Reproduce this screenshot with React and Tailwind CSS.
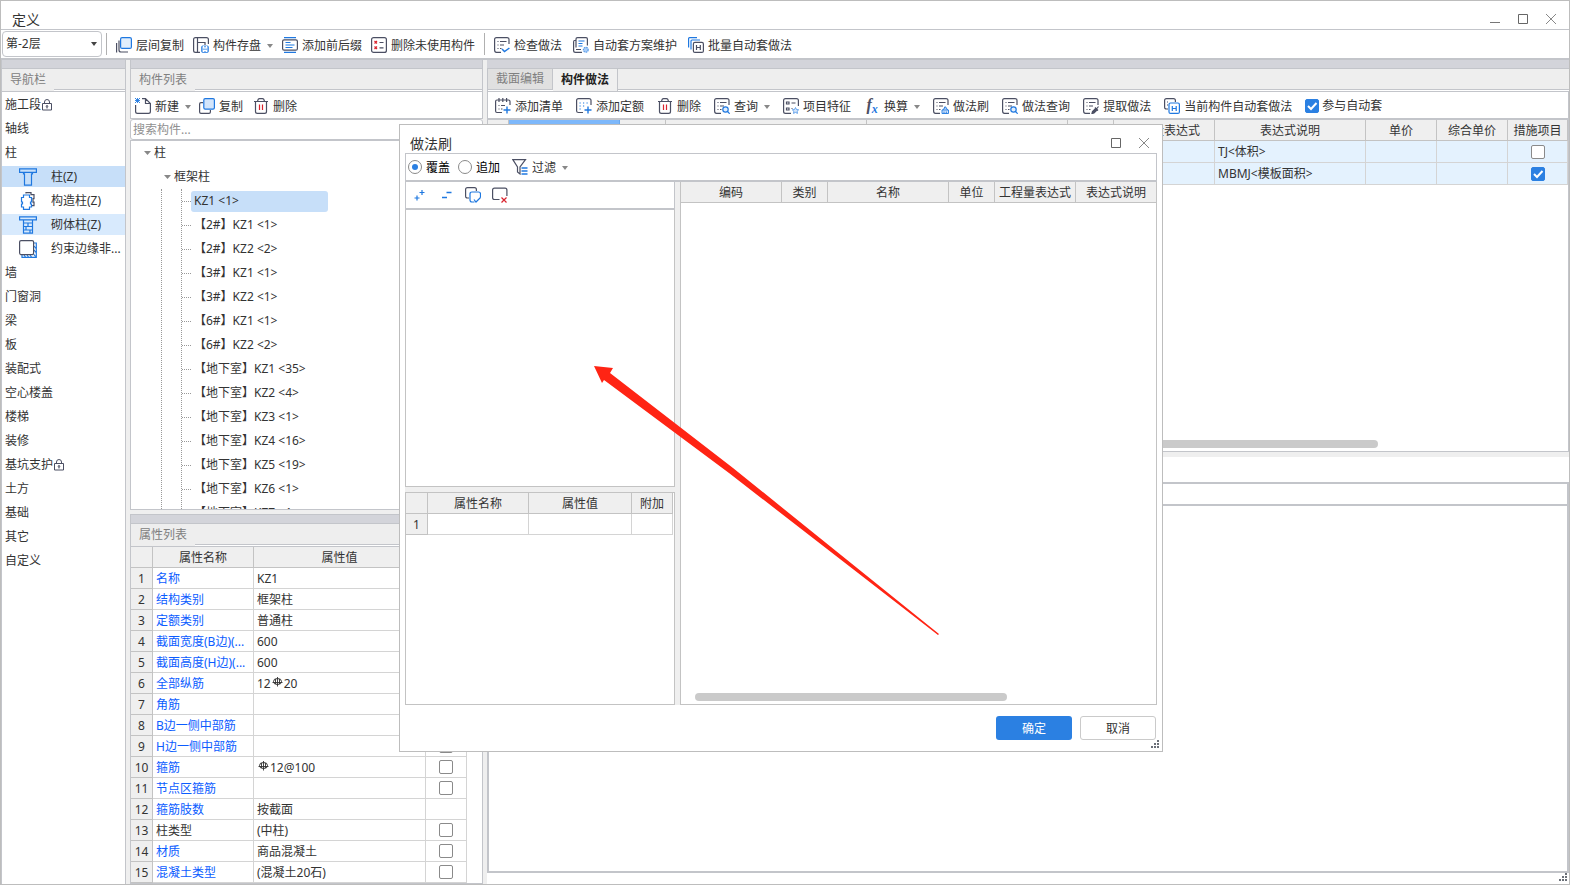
import React, { useState } from 'react';

const DARK = '#4b4f63';
const BLUE = '#1f78e0';
const RED = '#d9232e';

const Icon = ({ children, size = 16 }) => (
    <svg width={size} height={size} viewBox="0 0 16 16" fill="none" stroke={DARK} strokeWidth="1.2" className="shrink-0" aria-hidden="true">
        {children}
    </svg>
);

// Sheet outline with list lines, shared by most of the "做法" icons
const Sheet = () => (
    <>
        <path d="M15 7V2.5Q15 .6 13 .6H2.5Q.6 .6 .6 2.5V13Q.6 15.4 2.5 15.4H7" />
        <path d="M3.5 4.5h1M6 4.5h6.500M3.500 8h1M6 8h4M3.500 11.500h1M6 11.500h1.500" />
    </>
);

const icons = {
    layers: (
        <Icon>
            <path d="M.6 6v9.400M3 3.500v9.500q0 2 2 2h7" />
            <rect x="4.600" y=".6" width="10.800" height="10.800" rx="1.500" fill="#e1eefc" stroke={BLUE} />
        </Icon>
    ),
    save: (
        <Icon>
            <path d="M15.400 7V2.500Q15.400.6 13.500.6H2.500Q.6.6.6 2.500V13.500Q.6 15.400 2.500 15.400H7M4.500.6v14.800M4.500 5.500h7.500V8" />
            <rect x="8.600" y="9" width="6.800" height="6.400" rx="1" fill="#8dbcf3" stroke={BLUE} strokeWidth=".8" />
            <path d="M10.500 9v2h3V9M10.500 15v-1.500h3V15" stroke="#fff" />
        </Icon>
    ),
    prefix: (
        <Icon>
            <path d="M2 .6h12M2 15.400h12" stroke={BLUE} />
            <rect x=".6" y="2.800" width="14.800" height="10.400" rx="1.500" />
            <path d="M3.500 5.500h5M3.500 8h9M3.500 10.500h7" stroke={BLUE} />
        </Icon>
    ),
    unused: (
        <Icon>
            <rect x=".6" y=".6" width="14.800" height="14.800" rx="2" />
            <path d="M3.500 4l2.500 2.500M6 4L3.500 6.500M3.500 9.500L6 12M6 9.500L3.500 12" stroke={RED} />
            <path d="M8.500 5.500h4M8.500 10.800h4" />
        </Icon>
    ),
    check: (
        <Icon>
            <Sheet />
            <path d="M8 12l2.500 2.500L15.400 11" stroke={BLUE} strokeWidth="1.500" />
        </Icon>
    ),
    scheme: (
        <Icon>
            <path d="M2.500 3.500H1.500Q.6 3.500.6 5v8.500q0 1.900 1.900 1.900H9M3 10.500V2Q3 .6 4.500.6h8.500Q14.400.6 14.400 2v6.500M3 12.500h5" />
            <path d="M5.500 4h6M5.500 6.500h4M5.500 9h4" stroke={BLUE} />
            <circle cx="12.800" cy="12.800" r="2.400" fill="#a9cdf7" stroke="#5a9dea" strokeDasharray="1.500 .6" />
        </Icon>
    ),
    batch: (
        <Icon>
            <path d="M.6 10.500V1.500Q.6.6 1.500.6H9M3 12.500V4q0-1 1-1h8" stroke={BLUE} />
            <rect x="5.400" y="5.400" width="10" height="10" rx="1.500" />
            <path d="M8.500 8v5M12.300 8v5M8.500 10.500h4" />
        </Icon>
    ),
    create: (
        <Icon>
            <path d="M.6 7v6.500q0 1.900 1.900 1.900h11q1.900 0 1.900-1.900V5.500L10.500.6H7M10.500.6V5.500h5" />
            <path d="M0 0l5 5M5 0L0 5M2.500 0v5M0 2.500h5" stroke={BLUE} strokeWidth=".9" />
        </Icon>
    ),
    copy: (
        <Icon>
            <path d="M4 4.600H2q-1.400 0-1.400 1.400v8q0 1.400 1.400 1.400h8q1.400 0 1.400-1.400v-2" />
            <rect x="4.800" y=".6" width="10.600" height="10.600" rx="1.400" fill="#d3e5fb" stroke={BLUE} />
        </Icon>
    ),
    trash: (
        <Icon>
            <path d="M1 3.500h14M4.500 3.500Q5 .6 6.500.6h3Q11 .6 11.500 3.500M2.500 3.500v10q0 1.900 1.900 1.900h7.200q1.900 0 1.900-1.900v-10" />
            <path d="M6.500 6.500v5.500M9.500 6.500v5.500" stroke={RED} />
        </Icon>
    ),
    addList: (
        <Icon>
            <path d="M15 7V3.500Q15 2 13.500 2H2Q.6 2 .6 3.500V13Q.6 14.500 2 14.500H7M4 0v4M7.800 0v4M11.600 0v4M3.500 7.500h1M6 7.500h4M3.500 11h1M6 11h1.500" />
            <path d="M12 8.500v7M8.500 12h7" stroke={BLUE} strokeWidth="1.400" />
        </Icon>
    ),
    addQuota: (
        <Icon>
            <path d="M15 7V2.500Q15 .6 13 .6H2.500Q.6.6.6 2.500V13Q.6 14.500 2.500 14.500H7" />
            <path d="M3.500 5h1.200M7 5h1.200M10.500 5h1.200M3.500 8h1.200M7 8h1.200M3.500 11h1.200" stroke={BLUE} />
            <path d="M12 8.500v7M8.500 12h7" stroke={BLUE} strokeWidth="1.400" />
        </Icon>
    ),
    query: (
        <Icon>
            <Sheet />
            <circle cx="11.500" cy="11.500" r="2.700" fill="#e1eefc" stroke={BLUE} />
            <path d="M13.500 13.500l2.200 2.200" stroke={BLUE} />
        </Icon>
    ),
    feature: (
        <Icon>
            <path d="M15.400 8V2.500Q15.400.6 13.500.6H2.500Q.6.6.6 2.500V13.500Q.6 15.400 2.500 15.400H8" />
            <path d="M3.500 4h2.500v2H3.500zM3.500 10h2.500v2H3.500zM8.500 5h4M8.500 10.500h1" />
            <path d="M12.500 9.500l1 2 2.200.3-1.600 1.500.4 2.100-2-1-2 1 .4-2.100-1.600-1.500 2.200-.3z" fill="#d3e5fb" stroke="#5a9dea" strokeWidth=".9" />
        </Icon>
    ),
    brush: (
        <Icon>
            <Sheet />
            <path d="M9 15.500V12h6.500v3.500zM11 15.500v-2M13.300 15.500v-2M10 12q0-1.500 1.500-1.500V9h1.500v1.500Q14.500 10.500 14.500 12" fill="#d3e5fb" stroke={BLUE} strokeWidth=".9" />
        </Icon>
    ),
    extract: (
        <Icon>
            <Sheet />
            <path d="M9 15.500l.5-2 3-3 1.500 1.500-3 3zM12 9.500l3 3M13.500 11l2-2.500" fill={DARK} />
        </Icon>
    ),
    current: (
        <Icon>
            <path d="M4 11H2.500Q.6 11 .6 9V2.500Q.6.6 2.500.6h7q1.900 0 1.900 1.900V4M3 4h1M3 7h1" />
            <rect x="5" y="5" width="10.400" height="10.400" rx="1.500" stroke={BLUE} />
            <path d="M8.300 8v5M12.200 8v5M8.300 10.500h4" stroke={BLUE} />
        </Icon>
    ),
    filter: (
        <Icon>
            <path d="M8 15V8L13.500.6H.8L5.500 8v5z" stroke={DARK} />
            <path d="M9.500 9h6M9.500 12h6M9.500 15h6" stroke={BLUE} strokeWidth="1.400" />
        </Icon>
    ),
    expand: (
        <Icon>
            <path d="M11 3v5M8.500 5.500h5M6 8.500v5M3.500 11h5" stroke={BLUE} />
        </Icon>
    ),
    collapse: (
        <Icon>
            <path d="M8.500 5.500h5M4 10.500h5" stroke={BLUE} strokeWidth="1.300" />
        </Icon>
    ),
    copyCheck: (
        <Icon>
            <path d="M4 11H2.500Q.6 11 .6 9V2.500Q.6.6 2.500.6h7q1.900 0 1.900 1.900V4" />
            <path d="M9.500 15H7q-2 0-2-2V7q0-2 2-2h6.500q2 0 2 2v3.500M9 12.500l2 2.500 4.500-4.500" stroke={BLUE} />
        </Icon>
    ),
    clear: (
        <Icon>
            <path d="M7.500 12.500H2.500Q.6 12.500.6 10.500V3q0-1.900 1.900-1.900h10.500q1.900 0 1.900 1.900v6" />
            <path d="M9.500 10.500l5 5M14.500 10.500l-5 5" stroke={RED} />
        </Icon>
    )
};

const navIcons = {
    column: (
        <svg width="18" height="18" viewBox="0 0 18 18" fill="none" stroke={BLUE} strokeWidth="1.200" aria-hidden="true">
            <path d="M.6.8h16.800v3.500H.6zM4.500 4.300v1.500h1v11.400h7V5.800h1V4.300" />
        </svg>
    ),
    structural: (
        <svg width="18" height="18" viewBox="0 0 18 18" fill="none" stroke={BLUE} strokeWidth="1.200" aria-hidden="true">
            <path d="M7 1.500V.6h5v2h3v4h-1v3.500h1v3.500h-2" stroke={DARK} />
            <path d="M4.500 3h6v2.500h2V10h-1v2h1v3h-2v2.400h-6V15h-2v-3h1v-2h-1V5.500h2z" />
        </svg>
    ),
    masonry: (
        <svg width="18" height="18" viewBox="0 0 18 18" fill="none" stroke={BLUE} strokeWidth="1.200" aria-hidden="true">
            <path d="M.6.8h16.800v3H.6zM4.500 4v13.200h9V4M4.500 7h9M4.500 10.500h9M4.500 14h9M9 7v3.500M7 10.500V14M11 14v3" />
        </svg>
    ),
    edge: (
        <svg width="18" height="18" viewBox="0 0 18 18" fill="none" stroke={DARK} strokeWidth="1.200" aria-hidden="true">
            <path d="M3 15v2.300h14.300V3H15M5 15l1.500 2M8 15l1.500 2M11 15l1.500 2M14.500 14l2 2.500M15 10l2 2.500M15 6l2 2.500" stroke={BLUE} />
            <rect x=".6" y=".6" width="14" height="14" rx="1.500" />
        </svg>
    )
};

const Caret = ({ dark, large }) => (
    <svg width={large ? 7 : 6} height="4" viewBox="0 0 6 4" preserveAspectRatio="none" fill={dark ? '#444' : '#888'} className="shrink-0" aria-hidden="true">
        <path d="M0 0h6L3 4z" />
    </svg>
);

const Lock = () => (
    <svg width="10" height="12" viewBox="0 0 10 12" fill="none" stroke={DARK} aria-hidden="true">
        <path d="M2.500 4.500V3q0-2.500 2.500-2.500T7.500 3v1.500M.5 4.500h9v6.500h-9zM5 8v1.500" />
        <circle cx="5" cy="7.300" r=".8" />
    </svg>
);

// Rebar grade mark, has no unicode glyph
const Rebar = () => (
    <svg width="11" height="10" viewBox="0 0 11 10" fill="none" stroke="#333" className="mx-px mb-1" aria-label="C">
        <ellipse cx="5.500" cy="4.500" rx="4" ry="3" />
        <path d="M5.500 0v9.500M3.500 2v5M7.500 2v5M.5 5.500h10" strokeWidth=".9" />
    </svg>
);

const Grip = () => (
    <svg width="8" height="8" viewBox="0 0 8 8" fill="#6b7078" aria-hidden="true">
        <path d="M6 0h2v2H6zM3 3h2v2H3zM6 3h2v2H6zM0 6h2v2H0zM3 6h2v2H3zM6 6h2v2H6z" />
    </svg>
);

const WindowControls = ({ minimize }) => (
    <div className="flex pr-1">
        {minimize && (
            <button className="flex w-7 justify-center" aria-label="最小化">
                <svg width="12" height="12" viewBox="0 0 12 12" stroke="#777"><path d="M1 9.500h10" /></svg>
            </button>
        )}
        <button className="flex w-7 justify-center" aria-label="最大化">
            <svg width="12" height="12" viewBox="0 0 12 12" fill="none" stroke="#666"><path d="M1.500 1.500h9v9h-9z" /></svg>
        </button>
        <button className="flex w-7 justify-center" aria-label="关闭">
            <svg width="12" height="12" viewBox="0 0 12 12" stroke="#888"><path d="M1 1l10 10M11 1L1 11" /></svg>
        </button>
    </div>
);

const ToolButton = ({ icon, label, menu }) => (
    <button className="flex items-center gap-1 whitespace-nowrap">
        {icons[icon]}
        <span className="pt-0.5">{label}</span>
        {menu && <span className="pt-0.5 pl-0.5"><Caret /></span>}
    </button>
);

const CheckBox = ({ checked, label, id }) => {
    const [on, setOn] = useState(Boolean(checked));
    return (
        <span className="inline-grid align-middle">
            <input
                id={id}
                type="checkbox"
                aria-label={label}
                checked={on}
                onChange={() => setOn(!on)}
                className="col-start-1 row-start-1 size-3.5 appearance-none rounded-xs border border-[#8a8a8a] bg-white checked:border-[#2b80e2] checked:bg-[#2b80e2]"
            />
            {on && (
                <svg width="14" height="14" viewBox="0 0 14 14" fill="none" stroke="#fff" strokeWidth="2" className="pointer-events-none col-start-1 row-start-1">
                    <path d="M3 7l3 3 5.500-6" />
                </svg>
            )}
        </span>
    );
};

const PanelTitle = ({ children }) => (
    <>
        <div className="h-[9px] shrink-0 border-b border-[#c3c5ca] bg-[#d3d4da]" />
        <div className="flex h-[22px] shrink-0 items-start bg-white text-[#808080]">
            <h2 className="flex h-[22px] items-center bg-[#eeeeee] px-2">{children}</h2>
            <div className="h-[21px] flex-1 border-b border-[#c3c5ca] bg-[#eeeeee]" />
        </div>
    </>
);

const navItems = [
    { label: '施工段', locked: true },
    { label: '轴线' },
    { label: '柱' },
    { label: '柱(Z)', icon: 'column', bg: 'bg-[#c7dff9]' },
    { label: '构造柱(Z)', icon: 'structural' },
    { label: '砌体柱(Z)', icon: 'masonry', bg: 'bg-[#d8eafd]' },
    { label: '约束边缘非...', icon: 'edge' },
    { label: '墙' },
    { label: '门窗洞' },
    { label: '梁' },
    { label: '板' },
    { label: '装配式' },
    { label: '空心楼盖' },
    { label: '楼梯' },
    { label: '装修' },
    { label: '基坑支护', locked: true },
    { label: '土方' },
    { label: '基础' },
    { label: '其它' },
    { label: '自定义' }
];

const members = [
    'KZ1 <1>',
    '【2#】KZ1 <1>',
    '【2#】KZ2 <2>',
    '【3#】KZ1 <1>',
    '【3#】KZ2 <1>',
    '【6#】KZ1 <1>',
    '【6#】KZ2 <2>',
    '【地下室】KZ1 <35>',
    '【地下室】KZ2 <4>',
    '【地下室】KZ3 <1>',
    '【地下室】KZ4 <16>',
    '【地下室】KZ5 <19>',
    '【地下室】KZ6 <1>',
    '【地下室】KZ7 <1>'
];

const properties = [
    { name: '名称', value: 'KZ1' },
    { name: '结构类别', value: '框架柱', box: true },
    { name: '定额类别', value: '普通柱', box: true },
    { name: '截面宽度(B边)(...', value: '600', box: true },
    { name: '截面高度(H边)(...', value: '600', box: true },
    { name: '全部纵筋', value: <span className="flex items-center">12<Rebar />20</span>, box: true },
    { name: '角筋', value: '', box: true },
    { name: 'B边一侧中部筋', value: '', box: true },
    { name: 'H边一侧中部筋', value: '', box: true },
    { name: '箍筋', value: <span className="flex items-center"><Rebar />12@100</span>, box: true },
    { name: '节点区箍筋', value: '', box: true },
    { name: '箍筋肢数', value: '按截面' },
    { name: '柱类型', value: '(中柱)', plain: true, box: true },
    { name: '材质', value: '商品混凝土', box: true },
    { name: '混凝土类型', value: '(混凝土20石)', box: true }
];

const th = 'h-[21px] border-r border-b border-[#c3c3c3] bg-[#efefef] p-0 pt-0.5 text-center font-normal whitespace-nowrap';
const rowNo = 'h-[21px] border-r border-b border-[#c3c3c3] bg-[#efefef] p-0 pt-0.5 text-center font-normal';
const td = 'h-[21px] border-r border-b border-[#d4d4d4] p-0 whitespace-nowrap';

const Sidebar = () => (
    <nav className="flex w-[125px] shrink-0 flex-col border-x border-[#c3c5ca] bg-white">
        <PanelTitle>导航栏</PanelTitle>
        <ul className="flex-1 border-t border-[#c3c5ca] pt-px">
            {navItems.map((item) => (
                <li key={item.label} className="h-6 pt-px">
                    {item.icon ? (
                        <a href="#" className={`flex h-[21px] items-center gap-3.5 pl-[17px] whitespace-nowrap ${item.bg || ''}`}>
                            {navIcons[item.icon]}
                            {item.label}
                        </a>
                    ) : (
                        <a href="#" className="flex h-[21px] items-center gap-px pl-[3px]">
                            {item.label}
                            {item.locked && <Lock />}
                        </a>
                    )}
                </li>
            ))}
        </ul>
    </nav>
);

const MemberTree = () => (
    <div className="min-h-0 flex-1 overflow-hidden border border-[#c3c5ca] bg-white">
        <div className="flex h-6 items-center gap-[3px] pl-[13px]"><Caret large />柱</div>
        <div className="flex h-6 items-center gap-[3px] pl-[33px]"><Caret large />框架柱</div>
        <div className="ml-[30px] border-l border-dotted border-[#999] pl-[19px]">
            <ul className="border-l border-dotted border-[#999]">
                {members.map((name, index) => (
                    <li key={name} className="flex h-6 items-center">
                        <span className="w-[9px] border-t border-dotted border-[#999]" />
                        <span className={`flex h-[21px] w-[137px] items-center rounded-[3px] pl-[3px] whitespace-nowrap ${index === 0 ? 'bg-[#c7dff9]' : ''}`}>
                            {name}
                        </span>
                    </li>
                ))}
            </ul>
        </div>
    </div>
);

const PropertyTable = () => (
    <div className="shrink-0 border border-[#c3c5ca] bg-white">
        <table className="w-[336px] table-fixed border-separate border-spacing-0">
            <colgroup>
                <col className="w-[22px]" />
                <col className="w-[101px]" />
                <col className="w-[172px]" />
                <col className="w-[41px]" />
            </colgroup>
            <thead>
                <tr>
                    <th className={th} />
                    <th className={th}>属性名称</th>
                    <th className={th}>属性值</th>
                    <th className={th} />
                </tr>
            </thead>
            <tbody>
                {properties.map((row, index) => (
                    <tr key={row.name}>
                        <th className={rowNo}>{index + 1}</th>
                        <td className={`${td} pt-0.5 pl-[3px] ${row.plain ? '' : 'text-[#0b5cff]'}`}>{row.name}</td>
                        <td className={`${td} pt-0.5 pl-[3px]`}>{row.value}</td>
                        <td className={`${td} text-center leading-none`}>{row.box && <CheckBox label={row.name} />}</td>
                    </tr>
                ))}
            </tbody>
        </table>
    </div>
);

const MemberPanel = () => (
    <section className="flex w-[353px] shrink-0 flex-col">
        <div className="flex min-h-0 flex-1 flex-col">
            <div className="flex shrink-0 flex-col border-x border-[#c3c5ca]"><PanelTitle>构件列表</PanelTitle></div>
            <div className="flex h-7 shrink-0 items-center gap-2 border border-[#c3c5ca] bg-white pt-px pl-1">
                <ToolButton icon="create" label="新建" menu />
                <ToolButton icon="copy" label="复制" />
                <span className="pl-0.5"><ToolButton icon="trash" label="删除" /></span>
            </div>
            <input
                type="text"
                aria-label="搜索构件"
                placeholder="搜索构件..."
                className="h-[21px] shrink-0 rounded-[3px] border border-[#c3c5ca] bg-white px-0.5 placeholder:text-[#909090]"
            />
            <MemberTree />
        </div>
        <div className="mt-1 flex shrink-0 flex-col">
            <div className="flex flex-col border-x border-t border-[#c3c5ca]"><PanelTitle>属性列表</PanelTitle></div>
            <PropertyTable />
        </div>
    </section>
);

const practiceRows = [
    { expr: 'TJ<体积>', measure: false },
    { expr: 'MBMJ<模板面积>', measure: true }
];

const PracticePanel = () => (
    <section className="flex min-w-0 flex-1 flex-col bg-white">
        <div className="h-[9px] shrink-0 border-b border-[#c3c5ca] bg-[#d3d4da]" />
        <div role="tablist" className="flex h-[22px] shrink-0 items-start border-l border-[#c3c5ca]">
            <button role="tab" aria-selected="false" className="h-[21px] border-r border-b border-[#c3c5ca] bg-[#e0e0e0] px-2 text-[#808080]">截面编辑</button>
            <button role="tab" aria-selected="true" className="h-[22px] border-r border-[#c3c5ca] bg-[#f0f0f0] px-2 font-bold text-[#222]">构件做法</button>
            <div className="h-[21px] flex-1 border-b border-[#c3c5ca] bg-[#eeeeee]" />
        </div>
        <div className="flex h-[29px] shrink-0 items-center gap-[13px] border border-b-2 border-[#c3c5ca] pt-px pl-[7px]">
            <ToolButton icon="addList" label="添加清单" />
            <ToolButton icon="addQuota" label="添加定额" />
            <ToolButton icon="trash" label="删除" />
            <ToolButton icon="query" label="查询" menu />
            <ToolButton icon="feature" label="项目特征" />
            <button className="flex items-center gap-1 whitespace-nowrap">
                <span className="w-4 font-['Liberation_Serif',serif] text-base leading-4 font-bold text-[#4b4f63] italic">
                    f<sub className="text-xs text-[#1f78e0]">x</sub>
                </span>
                <span className="pt-0.5">换算</span>
                <span className="pt-0.5 pl-0.5"><Caret /></span>
            </button>
            <ToolButton icon="brush" label="做法刷" />
            <ToolButton icon="query" label="做法查询" />
            <ToolButton icon="extract" label="提取做法" />
            <ToolButton icon="current" label="当前构件自动套做法" />
            <span className="flex items-center gap-[3px] whitespace-nowrap">
                <CheckBox id="auto-join" checked />
                <label htmlFor="auto-join">参与自动套</label>
            </span>
        </div>
        <div className="flex h-[332px] shrink-0 flex-col border-x border-b border-[#c3c5ca]">
            <table className="w-full table-fixed border-separate border-spacing-0">
                <colgroup>
                    <col className="w-[21px]" />
                    <col className="w-[111px]" />
                    <col className="w-[46px]" />
                    <col className="w-[201px]" />
                    <col />
                    <col className="w-[46px]" />
                    <col className="w-[101px]" />
                    <col className="w-[151px]" />
                    <col className="w-[71px]" />
                    <col className="w-[71px]" />
                    <col className="w-[60px]" />
                </colgroup>
                <thead>
                    <tr>
                        <th className={th} />
                        <th className="border-r border-b border-[#6aa9ee] bg-[#7db8fb]" />
                        <th className={th} />
                        <th className={th} />
                        <th className={th} />
                        <th className={th} />
                        <th className={th}>工程量表达式</th>
                        <th className={th}>表达式说明</th>
                        <th className={th}>单价</th>
                        <th className={th}>综合单价</th>
                        <th className={th}>措施项目</th>
                    </tr>
                </thead>
                <tbody className="bg-[#e4f2fe]">
                    {practiceRows.map((row) => (
                        <tr key={row.expr} className="h-[22px]">
                            <th className={rowNo} />
                            <td className={td} />
                            <td className={td} />
                            <td className={td} />
                            <td className={td} />
                            <td className={td} />
                            <td className={td} />
                            <td className={`${td} pl-[3px]`}>{row.expr}</td>
                            <td className={td} />
                            <td className={td} />
                            <td className={`${td} text-center leading-none`}><CheckBox label={row.expr} checked={row.measure} /></td>
                        </tr>
                    ))}
                </tbody>
            </table>
            <div className="mt-auto mr-[190px] mb-[3px] ml-3 h-2 rounded-full bg-[#cacaca]" />
        </div>
        <div className="h-[5px] shrink-0 bg-[#efefef]" />
        <div className="h-[25px] shrink-0" />
        <div className="flex flex-1 flex-col border-2 border-[#c3c5ca]">
            <div className="h-[22px] border-b-2 border-[#c3c5ca]" />
        </div>
        <div className="flex h-[11px] shrink-0 justify-end pr-0.5"><Grip /></div>
    </section>
);

const BrushDialog = () => {
    const [mode, setMode] = useState('cover');
    const radio = 'grid size-3.5 appearance-none place-items-center rounded-full border border-[#8a8a8a] bg-white before:size-1.5 before:rounded-full checked:before:bg-[#2b80e2]';
    return (
        <div role="dialog" aria-label="做法刷" className="absolute top-[123px] left-[398px] flex h-[628px] w-[764px] flex-col border border-[#bdbdbd] bg-white">
            <div className="flex h-7 shrink-0 items-center justify-between pt-2 pl-2.5">
                <h2 className="pt-0.5 text-sm">做法刷</h2>
                <WindowControls />
            </div>
            <div className="mx-[5px] flex h-[29px] shrink-0 items-center gap-2 border border-b-2 border-[#c3c5ca] pl-0.5">
                <label className="flex items-center gap-1 text-black">
                    <input type="radio" name="mode" className={radio} checked={mode === 'cover'} onChange={() => setMode('cover')} />
                    <span className="pt-0.5">覆盖</span>
                </label>
                <label className="flex items-center gap-1 text-black">
                    <input type="radio" name="mode" className={radio} checked={mode === 'append'} onChange={() => setMode('append')} />
                    <span className="pt-0.5">追加</span>
                </label>
                <span className="pl-1"><ToolButton icon="filter" label="过滤" menu /></span>
            </div>
            <div className="mx-[5px] flex min-h-0 flex-1 bg-[#efefef]">
                <div className="flex w-[270px] shrink-0 flex-col">
                    <div className="flex h-7 shrink-0 items-center gap-[11px] border-x border-b-2 border-[#c3c5ca] bg-white pl-[5px]">
                        <button aria-label="展开">{icons.expand}</button>
                        <button aria-label="折叠">{icons.collapse}</button>
                        <button aria-label="全选">{icons.copyCheck}</button>
                        <button aria-label="清除">{icons.clear}</button>
                    </div>
                    <div className="flex-1 border-x border-b border-[#c3c3c3] bg-white" />
                    <div className="mt-[5px] h-[213px] shrink-0 border border-[#c3c3c3] bg-white">
                        <table className="w-[267px] table-fixed border-separate border-spacing-0">
                            <colgroup>
                                <col className="w-[22px]" />
                                <col className="w-[101px]" />
                                <col className="w-[103px]" />
                                <col className="w-[41px]" />
                            </colgroup>
                            <thead>
                                <tr>
                                    <th className={th} />
                                    <th className={th}>属性名称</th>
                                    <th className={th}>属性值</th>
                                    <th className={th}>附加</th>
                                </tr>
                            </thead>
                            <tbody>
                                <tr>
                                    <th className={rowNo}>1</th>
                                    <td className={td} />
                                    <td className={td} />
                                    <td className={td} />
                                </tr>
                            </tbody>
                        </table>
                    </div>
                </div>
                <div className="ml-[5px] flex flex-1 flex-col border-x border-b border-[#c3c3c3] bg-white">
                    <table className="w-full table-fixed border-separate border-spacing-0">
                        <colgroup>
                            <col className="w-[101px]" />
                            <col className="w-[46px]" />
                            <col className="w-[121px]" />
                            <col className="w-[46px]" />
                            <col className="w-[81px]" />
                            <col />
                        </colgroup>
                        <thead>
                            <tr>
                                <th className={th}>编码</th>
                                <th className={th}>类别</th>
                                <th className={th}>名称</th>
                                <th className={th}>单位</th>
                                <th className={th}>工程量表达式</th>
                                <th className={`${th} border-r-0`}>表达式说明</th>
                            </tr>
                        </thead>
                    </table>
                    <div className="mt-auto mb-[3px] ml-3.5 h-2 w-[312px] rounded-full bg-[#cacaca]" />
                </div>
            </div>
            <div className="flex h-[46px] shrink-0 items-start justify-end gap-2 pt-[11px] pr-1.5">
                <button className="h-6 w-[76px] rounded-[3px] bg-[#2b80e2] pt-0.5 text-white">确定</button>
                <button className="h-6 w-[76px] rounded-[3px] border border-[#cacaca] bg-white pt-0.5">取消</button>
            </div>
            <div className="absolute right-[3px] bottom-[3px]"><Grip /></div>
        </div>
    );
};

const App = () => {
    return (
        <div className="relative flex h-screen flex-col overflow-hidden border border-[#bdbdbd] bg-white font-['Noto_Sans','Noto_Sans_CJK_SC',sans-serif] text-xs text-[#333]">
            <header className="flex h-[29px] shrink-0 items-center justify-between border-b border-[#c3c5ca] pt-2 pl-[11px]">
                <h1 className="pt-0.5 text-sm">定义</h1>
                <WindowControls minimize />
            </header>
            <div className="flex h-[30px] shrink-0 items-center gap-[9px] border-b-2 border-[#c3c5ca] pl-px">
                <div className="flex items-center gap-1">
                    <div className="grid w-[100px] items-center">
                        <select aria-label="楼层" className="col-start-1 row-start-1 h-[26px] appearance-none rounded border border-[#c3c5ca] bg-white pl-[3px]">
                            <option>第-2层</option>
                        </select>
                        <span className="pointer-events-none col-start-1 row-start-1 justify-self-end pr-[5px]"><Caret dark /></span>
                    </div>
                    <div className="h-[22px] border-l border-[#b0b0b0]" />
                </div>
                <div className="flex items-center gap-[9px] pt-px">
                    <ToolButton icon="layers" label="层间复制" />
                    <ToolButton icon="save" label="构件存盘" menu />
                    <ToolButton icon="prefix" label="添加前后缀" />
                    <ToolButton icon="unused" label="删除未使用构件" />
                </div>
                <div className="h-[22px] border-l border-[#b0b0b0]" />
                <div className="flex items-center gap-[11px] pt-px">
                    <ToolButton icon="check" label="检查做法" />
                    <ToolButton icon="scheme" label="自动套方案维护" />
                    <ToolButton icon="batch" label="批量自动套做法" />
                </div>
            </div>
            <main className="flex min-h-0 flex-1 gap-1 bg-[#efefef]">
                <Sidebar />
                <MemberPanel />
                <PracticePanel />
            </main>
            <BrushDialog />
            <svg width="350" height="274" viewBox="0 0 350 274" className="pointer-events-none absolute top-[363px] left-[592px]" fill="#ff2414" aria-hidden="true">
                <path d="M1 2L20 4L17 9L140 104L346 270L345 271L136 109L11 16L9 19Z" />
            </svg>
        </div>
    );
};

export default App;
